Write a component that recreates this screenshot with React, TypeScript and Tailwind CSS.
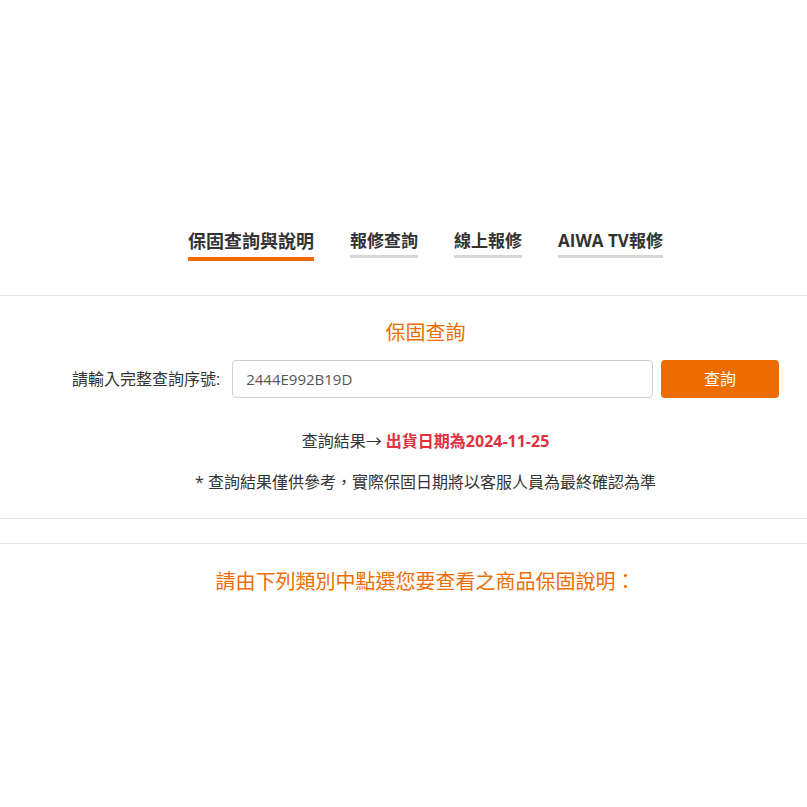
import React from "react";

const FONT = { fontFamily: '"Open Sans", "Noto Sans CJK TC", sans-serif' };

export default function App() {
  const tabs = ["保固查詢與說明", "報修查詢", "線上報修", "AIWA TV報修"];
  return (
    <div className="w-[807px] min-h-[807px] bg-white text-[#333]" style={FONT}>
      <div className="h-[228px]" />
      <div className="flex justify-center items-end gap-[36px] pl-[44px]">
        {tabs.map((t, i) =>
          i === 0 ? (
            <div key={t} className="flex flex-col items-stretch">
              <div className="text-[18px] font-bold leading-[26px] text-[#333] whitespace-nowrap">{t}</div>
              <div className="mt-[3px] h-[4px] bg-[#ee6c00]" />
            </div>
          ) : (
            <div key={t} className="flex flex-col items-stretch pb-[3px]">
              <div className="text-[17px] font-bold leading-[26px] text-[#333] whitespace-nowrap">{t}</div>
              <div className="mt-[1px] h-[3px] bg-[#d6d6d6]" />
            </div>
          )
        )}
      </div>
      <div className="mt-[34px] border-t border-[#e3e3e3]" />
      <div className="pl-[44px]">
        <div className="pt-[21px] text-center text-[20px] leading-[32px] text-[#ee6c00]">保固查詢</div>
        <div className="mt-[11px] flex items-center justify-center px-[28px]">
          <div className="text-[16px] text-[#333] whitespace-nowrap mr-[12px]">請輸入完整查詢序號:</div>
          <div className="flex-1 h-[38px] rounded-[4px] border border-[#cdd1d6] flex items-center px-[13px] text-[15px] text-[#555]">
            2444E992B19D
          </div>
          <button className="ml-[8px] w-[118px] h-[38px] rounded-[4px] bg-[#ec6c00] text-white text-[16px]">查詢</button>
        </div>
        <div className="mt-[31px] text-center text-[16px] leading-[24px] text-[#333]">
          查詢結果→ <span className="font-bold text-[#e0313f]">出貨日期為2024-11-25</span>
        </div>
        <div className="mt-[17px] text-center text-[16px] leading-[24px] text-[#333]">
          * 查詢結果僅供參考，實際保固日期將以客服人員為最終確認為準
        </div>
      </div>
      <div className="mt-[24px] border-t border-[#e3e3e3]" />
      <div className="mt-[24px] border-t border-[#e3e3e3]" />
      <div className="pl-[44px] pt-[22px] text-center text-[20px] leading-[32px] text-[#ee6c00]">
        請由下列類別中點選您要查看之商品保固說明：
      </div>
    </div>
  );
}
